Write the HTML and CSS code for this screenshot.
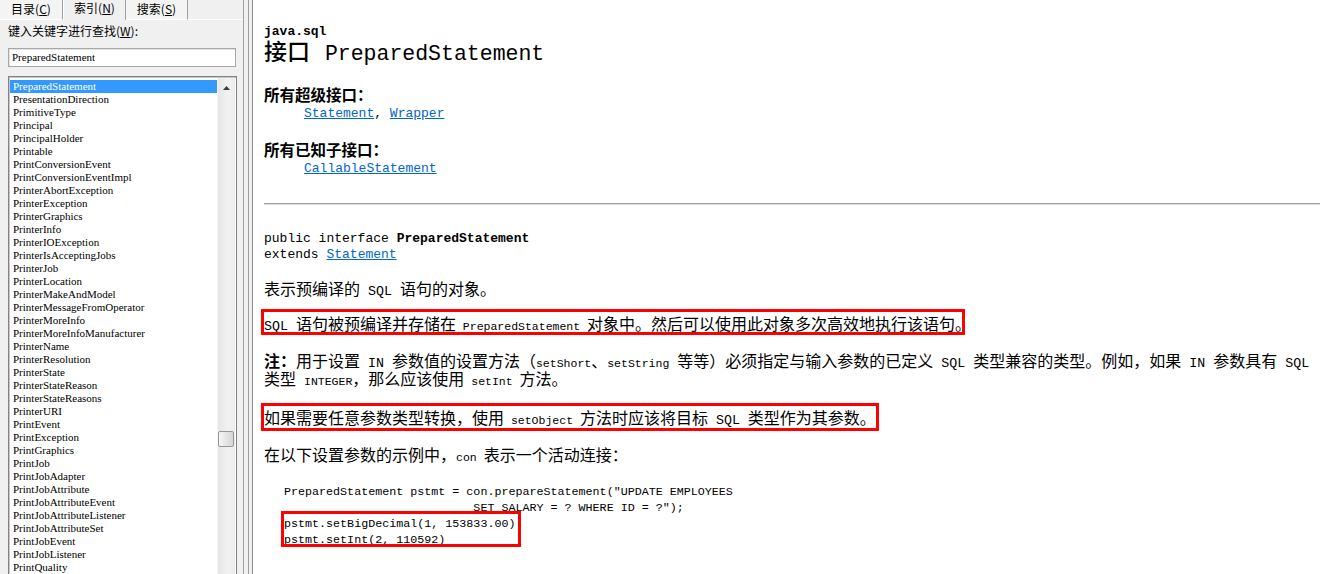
FILE: index.html
```html
<!DOCTYPE html>
<html lang="zh-CN">
<head>
<meta charset="utf-8">
<title>PreparedStatement</title>
<link rel="stylesheet" href="styles.css">
</head>
<body>
<div class="app">
  <aside class="nav">
    <div class="tabs">
      <div class="tab">目录(<u>C</u>)</div>
      <div class="tab active">索引(<u>N</u>)</div>
      <div class="tab">搜索(<u>S</u>)</div>
      <div class="tab-fill"></div>
    </div>
    <div class="panel">
      <div class="kw-label">键入关键字进行查找(<u>W</u>):</div>
      <div class="search">PreparedStatement</div>
      <div class="listbox">
        <ul class="items">
          <li class="sel">PreparedStatement</li>
          <li>PresentationDirection</li>
          <li>PrimitiveType</li>
          <li>Principal</li>
          <li>PrincipalHolder</li>
          <li>Printable</li>
          <li>PrintConversionEvent</li>
          <li>PrintConversionEventImpl</li>
          <li>PrinterAbortException</li>
          <li>PrinterException</li>
          <li>PrinterGraphics</li>
          <li>PrinterInfo</li>
          <li>PrinterIOException</li>
          <li>PrinterIsAcceptingJobs</li>
          <li>PrinterJob</li>
          <li>PrinterLocation</li>
          <li>PrinterMakeAndModel</li>
          <li>PrinterMessageFromOperator</li>
          <li>PrinterMoreInfo</li>
          <li>PrinterMoreInfoManufacturer</li>
          <li>PrinterName</li>
          <li>PrinterResolution</li>
          <li>PrinterState</li>
          <li>PrinterStateReason</li>
          <li>PrinterStateReasons</li>
          <li>PrinterURI</li>
          <li>PrintEvent</li>
          <li>PrintException</li>
          <li>PrintGraphics</li>
          <li>PrintJob</li>
          <li>PrintJobAdapter</li>
          <li>PrintJobAttribute</li>
          <li>PrintJobAttributeEvent</li>
          <li>PrintJobAttributeListener</li>
          <li>PrintJobAttributeSet</li>
          <li>PrintJobEvent</li>
          <li>PrintJobListener</li>
          <li>PrintQuality</li>
        </ul>
        <div class="vscroll">
          <div class="sb-up"><svg width="7" height="4" viewBox="0 0 7 4"><path d="M0 4 L3.5 0 L7 4 Z" fill="#3c3c3c"/></svg></div>
          <div class="sb-track"><div class="sb-thumb"></div></div>
        </div>
      </div>
    </div>
  </aside>
  <div class="split"></div>
  <main class="doc">
    <div class="page">
      <div class="pkg">java.sql</div>
      <h2 class="title"><span class="title-cjk">接口</span> PreparedStatement</h2>
      <dl class="supers">
        <dt>所有超级接口：</dt>
        <dd><a href="#">Statement</a>, <a href="#">Wrapper</a></dd>
        <dt>所有已知子接口：</dt>
        <dd><a href="#">CallableStatement</a></dd>
      </dl>
      <hr class="rule">
      <div class="decl">public interface <b>PreparedStatement</b><br>extends <a href="#">Statement</a></div>
      <p class="txt">表示预编译的<span class="lat"> SQL </span>语句的对象。</p>
      <p class="txt boxed b1"><span class="lat">SQL </span>语句被预编译并存储在<code> PreparedStatement </code>对象中。然后可以使用此对象多次高效地执行该语句。</p>
      <p class="txt note"><b>注：</b>用于设置<span class="lat"> IN </span>参数值的设置方法（<code>setShort</code>、<code>setString</code><span class="lat"> </span>等等）必须指定与输入参数的已定义<span class="lat"> SQL </span>类型兼容的类型。例如，如果<span class="lat"> IN </span>参数具有<span class="lat"> SQL</span><br>类型<span class="lat"> </span><code>INTEGER</code>，那么应该使用<code> setInt </code>方法。</p>
      <p class="txt boxed b2">如果需要任意参数类型转换，使用<code> setObject </code>方法时应该将目标<span class="lat"> SQL </span>类型作为其参数。</p>
      <p class="txt intro">在以下设置参数的示例中，<code>con </code>表示一个活动连接：</p>
<pre class="example">PreparedStatement pstmt = con.prepareStatement("UPDATE EMPLOYEES
                           SET SALARY = ? WHERE ID = ?");
<span class="mark">pstmt.setBigDecimal(1, 153833.00)
pstmt.setInt(2, 110592)</span></pre>
    </div>
  </main>
</div>
</body>
</html>
```
FILE: styles.css
```css
* { box-sizing: border-box; }
html, body { margin: 0; padding: 0; }
body {
  width: 1320px;
  height: 574px;
  overflow: hidden;
  background: #f0f0f0;
  font-family: "Noto Sans CJK SC", sans-serif;
  color: #000;
}
.app {
  display: flex;
  height: 574px;
}

/* ---------- left navigation pane ---------- */
.nav {
  width: 244px;
  flex: none;
  border-right: 1px solid #a0a0a0;
  display: flex;
  flex-direction: column;
  overflow: hidden;
}
.tabs {
  display: flex;
  height: 20px;
  flex: none;
  font-size: 12px;
  line-height: 14px;
}
.tab {
  width: 62px;
  height: 20px;
  background: #f4f4f4;
  border-right: 1px solid #a0a0a0;
  border-bottom: 1px solid #ffffff;
  text-align: center;
  padding-top: 2px;
}
.tab:first-child { width: 63px; }
.tab.active {
  background: #f0f0f0;
  border-bottom: none;
  border-left: 1px solid #ffffff;
  padding-top: 1px;
  width: 63px;
}
.tab-fill {
  flex: 1;
  border-bottom: 1px solid #ffffff;
}
.tab u, .kw-label u { text-decoration: underline; }
.panel {
  flex: 1;
  padding: 4px 0 0 8px;
  display: flex;
  flex-direction: column;
  min-height: 0;
}
.kw-label {
  font-size: 12px;
  line-height: 14px;
  height: 14px;
}
.search {
  margin-top: 10px;
  width: 228px;
  height: 19px;
  background: #fff;
  border: 1px solid #a8a8a8;
  box-shadow: inset 1px 1px 0 #e3e3e3;
  font-family: "Liberation Serif", serif;
  font-size: 11px;
  line-height: 17px;
  padding-left: 3px;
}
.listbox {
  margin-top: 9px;
  width: 229px;
  flex: 1;
  min-height: 0;
  background: #fff;
  border: 1px solid #828282;
  border-bottom: none;
  box-shadow: inset 1px 1px 0 #c8c8c8;
  padding: 1px 1px 0 1px;
  display: flex;
}
.items {
  list-style: none;
  margin: 0;
  padding: 2px 0 0 0;
  flex: 1;
  font-family: "Liberation Serif", serif;
  font-size: 11px;
  line-height: 13px;
  overflow: hidden;
}
.items li {
  height: 13px;
  padding-left: 3px;
  white-space: nowrap;
}
.items li.sel {
  background: #3399ff;
  color: #fff;
}
.vscroll {
  width: 18px;
  flex: none;
  display: flex;
  flex-direction: column;
  background: linear-gradient(to right, #e6e6e6, #f2f2f2 60%, #ececec);
  border-left: 1px solid #f6f6f6;
}
.sb-up {
  height: 17px;
  display: flex;
  align-items: center;
  justify-content: center;
  padding-top: 2px;
}
.sb-track {
  flex: 1;
}
.sb-thumb {
  margin: 336px 0 0 0;
  width: 16px;
  height: 16px;
  border: 1px solid #979797;
  border-radius: 2px;
  background: linear-gradient(to right, #f6f6f6, #e4e4e4 55%, #d6d6d6);
}

/* ---------- splitter ---------- */
.split {
  width: 4px;
  flex: none;
}

/* ---------- document pane ---------- */
.doc {
  flex: 1;
  border-left: 1px solid #a0a0a0;
  padding-left: 3px;
  display: flex;
  min-width: 0;
}
.page {
  flex: 1;
  background: #fff;
  border-left: 1px solid #8a8a8a;
  padding: 24px 0 0 11px;
  overflow: hidden;
  min-width: 0;
}
.pkg {
  font-family: "Liberation Mono", monospace;
  font-weight: bold;
  font-size: 13px;
  line-height: 16px;
}
.title {
  margin: 1px 0 0;
  font-family: "Liberation Mono", monospace;
  font-weight: normal;
  font-size: 21.5px;
  line-height: 26px;
  white-space: nowrap;
}
.title-cjk {
  font-family: "Noto Sans CJK SC", sans-serif;
  font-size: 23px;
  font-weight: 500;
  line-height: 0;
  margin-right: 2px;
}
.supers {
  margin: 18px 0 0;
}
.supers dt {
  font-size: 15.5px;
  font-weight: bold;
  line-height: 18px;
}
.supers dt + dd + dt {
  margin-top: 17px;
}
.supers dd {
  margin: 2px 0 0 40px;
  font-family: "Liberation Mono", monospace;
  font-size: 13px;
  line-height: 18px;
}
a {
  color: #0066cc;
  text-decoration: underline;
}
.rule {
  margin: 25px 0 0;
  border: none;
  border-top: 1px solid #a0a0a0;
  border-bottom: 1px solid #dcdcdc;
  height: 0;
}
.decl {
  margin-top: 26px;
  font-family: "Liberation Mono", monospace;
  font-size: 13px;
  line-height: 16px;
}
.txt {
  margin: 16px 0 0;
  font-size: 16px;
  line-height: 18px;
  white-space: nowrap;
}
.txt.b1 { margin-top: 17px; }
.txt.note { margin-top: 19px; }
.txt.b2 { margin-top: 21px; }
.txt.intro { margin-top: 19px; }
.txt b,
.txt code,
.txt .lat { line-height: 0; }
.lat {
  font-family: "Liberation Mono", monospace;
  font-size: 13.3px;
}
.txt code {
  font-family: "Liberation Mono", monospace;
  font-size: 11.5px;
}
.boxed {
  position: relative;
  width: fit-content;
}
.boxed::after,
.mark::after {
  content: "";
  position: absolute;
  top: -5px;
  bottom: -3px;
  left: -3px;
  right: -3px;
  border: 3px solid #ff0000;
  pointer-events: none;
}
.boxed.b1::after {
  right: 6px;
}
.boxed.b2::after {
  bottom: -5px;
}
.mark {
  position: relative;
  display: inline-block;
}
.mark::after {
  top: -5px;
  bottom: 1px;
  right: -6px;
}
.example {
  margin: 21px 0 0 20px;
  font-family: "Liberation Mono", monospace;
  font-size: 11.7px;
  line-height: 16px;
}
```
